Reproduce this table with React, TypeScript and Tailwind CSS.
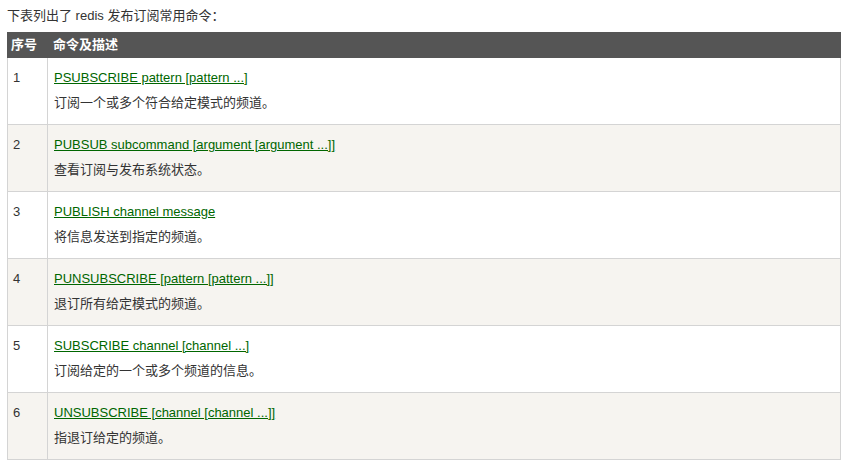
import React from "react";

const rows = [
  { n: "1", cmd: "PSUBSCRIBE pattern [pattern ...]", desc: "订阅一个或多个符合给定模式的频道。" },
  { n: "2", cmd: "PUBSUB subcommand [argument [argument ...]]", desc: "查看订阅与发布系统状态。" },
  { n: "3", cmd: "PUBLISH channel message", desc: "将信息发送到指定的频道。" },
  { n: "4", cmd: "PUNSUBSCRIBE [pattern [pattern ...]]", desc: "退订所有给定模式的频道。" },
  { n: "5", cmd: "SUBSCRIBE channel [channel ...]", desc: "订阅给定的一个或多个频道的信息。" },
  { n: "6", cmd: "UNSUBSCRIBE [channel [channel ...]]", desc: "指退订给定的频道。" },
];

export default function App() {
  return (
    <div
      className="w-[845px] h-[461px] bg-white text-[13px] text-[#333]"
      style={{ fontFamily: '"Liberation Sans", Arial, "Noto Sans CJK SC", sans-serif' }}
    >
      <div className="pl-[7px] pt-[6px] h-[32px] leading-[20px]">下表列出了 redis 发布订阅常用命令：</div>
      <div className="ml-[7px] w-[834px]">
        <div className="flex h-[26px] bg-[#555] text-white font-bold leading-[26px]">
          <div className="w-[41px] pl-[4px]">序号</div>
          <div className="pl-[5px]">命令及描述</div>
        </div>
        <div className="border-l border-r border-[#d4d4d4]">
          {rows.map((r, i) => (
            <div
              key={r.n}
              className={`flex border-b border-[#d4d4d4] ${i % 2 === 1 ? "bg-[#f6f4f0]" : "bg-white"}`}
            >
              <div className="w-[40px] border-r border-[#d4d4d4] pl-[5px] pt-[10px] leading-[20px]">{r.n}</div>
              <div className="flex flex-col pl-[6px] pt-[10px] pb-[11px] gap-[5px] leading-[20px]">
                <a href="#" className="text-[#006600] underline self-start">{r.cmd}</a>
                <div>{r.desc}</div>
              </div>
            </div>
          ))}
        </div>
      </div>
    </div>
  );
}
